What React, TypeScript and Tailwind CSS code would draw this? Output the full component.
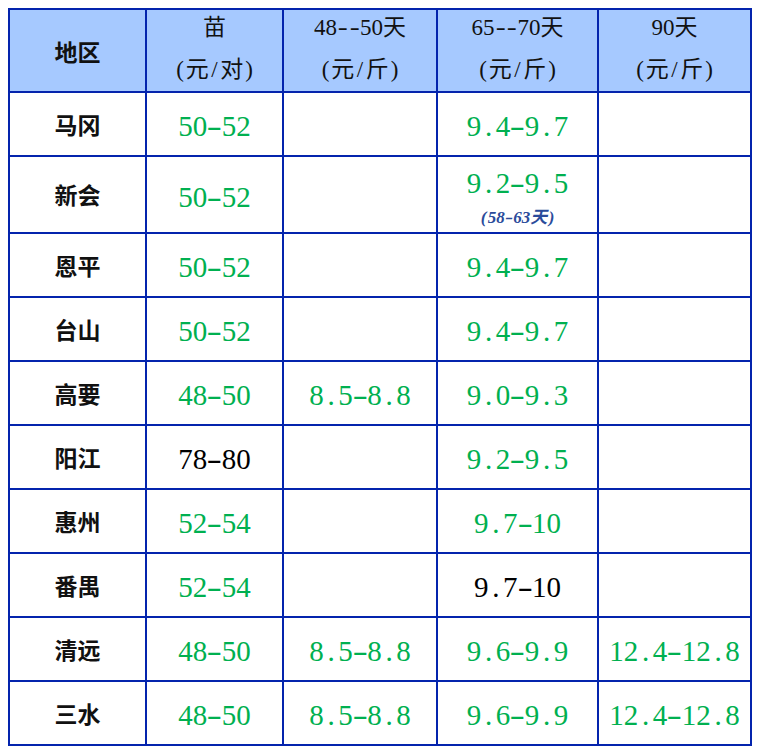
import React from "react";

// ─── Types ────────────────────────────────────────────────────────────────────

type Tone = "green" | "black";

interface PriceCell {
  text: string;
  tone?: Tone;
  note?: string;
}

interface Row {
  area: string;
  cells: (PriceCell | null)[];
}

// ─── Data ─────────────────────────────────────────────────────────────────────

const HEADERS: [string, string][] = [
  ["苗", "(元/对)"],
  ["48--50天", "(元/斤)"],
  ["65--70天", "(元/斤)"],
  ["90天", "(元/斤)"],
];

const g = (text: string, note?: string): PriceCell => ({ text, tone: "green", note });
const b = (text: string): PriceCell => ({ text, tone: "black" });

const ROWS: Row[] = [
  { area: "马冈", cells: [g("50-52"), null, g("9.4-9.7"), null] },
  { area: "新会", cells: [g("50-52"), null, g("9.2-9.5", "(58-63天)"), null] },
  { area: "恩平", cells: [g("50-52"), null, g("9.4-9.7"), null] },
  { area: "台山", cells: [g("50-52"), null, g("9.4-9.7"), null] },
  { area: "高要", cells: [g("48-50"), g("8.5-8.8"), g("9.0-9.3"), null] },
  { area: "阳江", cells: [b("78-80"), null, g("9.2-9.5"), null] },
  { area: "惠州", cells: [g("52-54"), null, g("9.7-10"), null] },
  { area: "番禺", cells: [g("52-54"), null, b("9.7-10"), null] },
  { area: "清远", cells: [g("48-50"), g("8.5-8.8"), g("9.6-9.9"), g("12.4-12.8")] },
  { area: "三水", cells: [g("48-50"), g("8.5-8.8"), g("9.6-9.9"), g("12.4-12.8")] },
];

// ─── Half-width text (each latin glyph gets an even 0.5em box) ────────────────

function HalfWidth({ text, dash = "scale-x-[1.6]" }: { text: string; dash?: string }) {
  return (
    <>
      {text.split("").map((ch, i) =>
        ch.charCodeAt(0) < 128 ? (
          <span
            key={i}
            className={["inline-block w-[0.5em] text-center", ch === "-" ? dash : ""].join(" ")}
          >
            {ch}
          </span>
        ) : (
          <span key={i}>{ch}</span>
        )
      )}
    </>
  );
}

// ─── Cells ────────────────────────────────────────────────────────────────────

function HeaderCell({ top, bottom }: { top: string; bottom: string }) {
  return (
    <div className="flex flex-col items-center bg-[#a6c9ff] text-[23px] text-[#111]">
      <div className="leading-[36px]">
        <HalfWidth text={top} dash="scale-x-[1.3]" />
      </div>
      <div className="mt-[4px] leading-[40px]">
        <HalfWidth text={bottom} />
      </div>
    </div>
  );
}

function DataCell({ cell }: { cell: PriceCell | null }) {
  if (!cell) return <div className="bg-white" />;
  const color = cell.tone === "black" ? "text-black" : "text-[#00b050]";

  if (cell.note) {
    return (
      <div className="flex flex-col items-center bg-white pt-[10px]">
        <div className={["text-[29px] leading-[32px]", color].join(" ")}>
          <HalfWidth text={cell.text} />
        </div>
        <div className="mt-[9px] text-[17px] italic font-semibold leading-[20px] text-[#2a4b9b]">
          <HalfWidth text={cell.note} dash="scale-x-[1.4]" />
        </div>
      </div>
    );
  }

  return (
    <div className="flex items-center justify-center bg-white pt-[4px]">
      <div className={["text-[29px] leading-[32px]", color].join(" ")}>
        <HalfWidth text={cell.text} />
      </div>
    </div>
  );
}

// ─── Page ─────────────────────────────────────────────────────────────────────

export default function App() {
  return (
    <div className="min-h-screen bg-white pl-[8px] pt-[8px] font-['Liberation_Serif','Noto_Sans_CJK_SC',serif]">
      <div className="grid w-[744px] grid-cols-[135px_135px_152px_159px_151px] grid-rows-[81px_62px_75px_repeat(8,62px)] gap-[2px] bg-[#0424ad] p-[2px]">
        <div className="flex items-center justify-center bg-[#a6c9ff] pt-[2px] font-['Noto_Sans_CJK_SC',sans-serif] text-[23px] font-semibold text-[#111]">
          地区
        </div>
        {HEADERS.map(([top, bottom]) => (
          <HeaderCell key={top} top={top} bottom={bottom} />
        ))}

        {ROWS.map((row) => (
          <React.Fragment key={row.area}>
            <div className="flex items-center justify-center bg-white font-['Noto_Sans_CJK_SC',sans-serif] text-[23px] font-semibold text-[#111]">
              {row.area}
            </div>
            {row.cells.map((cell, i) => (
              <DataCell key={i} cell={cell} />
            ))}
          </React.Fragment>
        ))}
      </div>
    </div>
  );
}
